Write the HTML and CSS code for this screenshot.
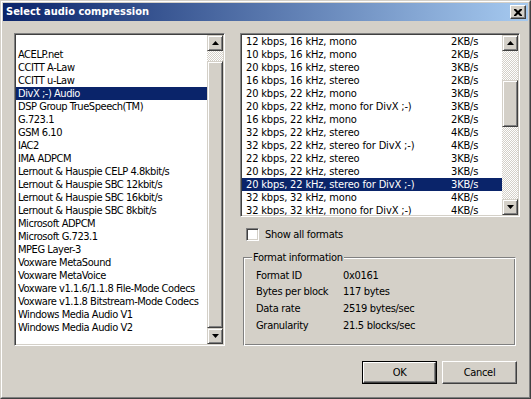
FILE: index.html
```html
<!DOCTYPE html>
<html>
<head>
<meta charset="utf-8">
<link rel="stylesheet" href="styles.css">
</head>
<body>
<div class="win">
  <div class="win-in">
    <div class="titlebar">
      <span class="title">Select audio compression</span>
      <div class="closebtn"><svg width="8" height="7" viewBox="0 0 8 7"><path d="M0 0h2l2 2 2-2h2v1l-2.5 2.5L8 6v1H6L4 5 2 7H0V6l2.5-2.5L0 1z" fill="#000"/></svg></div>
    </div>
    <div class="main">
      <div class="listbox lbox">
        <ul class="items litems">
          <li>&nbsp;</li>
          <li>ACELP.net</li>
          <li>CCITT A-Law</li>
          <li>CCITT u-Law</li>
          <li class="sel">DivX ;-) Audio</li>
          <li>DSP Group TrueSpeech(TM)</li>
          <li>G.723.1</li>
          <li>GSM 6.10</li>
          <li>IAC2</li>
          <li>IMA ADPCM</li>
          <li>Lernout &amp; Hauspie CELP 4.8kbit/s</li>
          <li>Lernout &amp; Hauspie SBC 12kbit/s</li>
          <li>Lernout &amp; Hauspie SBC 16kbit/s</li>
          <li>Lernout &amp; Hauspie SBC 8kbit/s</li>
          <li>Microsoft ADPCM</li>
          <li>Microsoft G.723.1</li>
          <li>MPEG Layer-3</li>
          <li>Voxware MetaSound</li>
          <li>Voxware MetaVoice</li>
          <li>Voxware v1.1.6/1.1.8 File-Mode Codecs</li>
          <li>Voxware v1.1.8 Bitstream-Mode Codecs</li>
          <li>Windows Media Audio V1</li>
          <li>Windows Media Audio V2</li>
        </ul>
        <div class="sb">
          <div class="sbtn"><svg width="7" height="4" viewBox="0 0 7 4"><path d="M3.5 0L7 4H0z" fill="#000"/></svg></div>
          <div class="track lt1"></div>
          <div class="thumb lth"></div>
          <div class="sbtn"><svg width="7" height="4" viewBox="0 0 7 4"><path d="M0 0h7L3.5 4z" fill="#000"/></svg></div>
        </div>
      </div>
      <div class="rcol">
        <div class="listbox rbox">
          <ul class="items ritems">
            <li><span class="c1">12 kbps, 16 kHz, mono</span><span>2KB/s</span></li>
            <li><span class="c1">10 kbps, 16 kHz, mono</span><span>2KB/s</span></li>
            <li><span class="c1">20 kbps, 16 kHz, stereo</span><span>3KB/s</span></li>
            <li><span class="c1">16 kbps, 16 kHz, stereo</span><span>2KB/s</span></li>
            <li><span class="c1">20 kbps, 22 kHz, mono</span><span>3KB/s</span></li>
            <li><span class="c1">20 kbps, 22 kHz, mono for DivX ;-)</span><span>3KB/s</span></li>
            <li><span class="c1">16 kbps, 22 kHz, mono</span><span>2KB/s</span></li>
            <li><span class="c1">32 kbps, 22 kHz, stereo</span><span>4KB/s</span></li>
            <li><span class="c1">32 kbps, 22 kHz, stereo for DivX ;-)</span><span>4KB/s</span></li>
            <li><span class="c1">22 kbps, 22 kHz, stereo</span><span>3KB/s</span></li>
            <li><span class="c1">20 kbps, 22 kHz, stereo</span><span>3KB/s</span></li>
            <li class="sel"><span class="c1">20 kbps, 22 kHz, stereo for DivX ;-)</span><span>3KB/s</span></li>
            <li><span class="c1">32 kbps, 32 kHz, mono</span><span>4KB/s</span></li>
            <li><span class="c1">32 kbps, 32 kHz, mono for DivX ;-)</span><span>4KB/s</span></li>
          </ul>
          <div class="sb">
            <div class="sbtn"><svg width="7" height="4" viewBox="0 0 7 4"><path d="M3.5 0L7 4H0z" fill="#000"/></svg></div>
            <div class="track rt1"></div>
            <div class="thumb rth"></div>
            <div class="track rt2"></div>
            <div class="sbtn"><svg width="7" height="4" viewBox="0 0 7 4"><path d="M0 0h7L3.5 4z" fill="#000"/></svg></div>
          </div>
        </div>
        <div class="chkrow">
          <span class="chk"></span>
          <span class="chklabel">Show all formats</span>
        </div>
        <div class="group">
          <span class="legend">Format information</span>
          <div class="info">
            <span>Format ID</span><span>0x0161</span>
            <span>Bytes per block</span><span>117 bytes</span>
            <span>Data rate</span><span>2519 bytes/sec</span>
            <span>Granularity</span><span>21.5 blocks/sec</span>
          </div>
        </div>
      </div>
    </div>
    <div class="buttons">
      <div class="btn default"><div class="btn-in">OK</div></div>
      <div class="btn"><div class="btn-in">Cancel</div></div>
    </div>
  </div>
</div>
</body>
</html>
```
FILE: styles.css
```css
html, body {
  margin: 0;
  padding: 0;
  background: #d4d0c8;
}
body {
  font-family: "DejaVu Sans Condensed", "DejaVu Sans", sans-serif;
  font-stretch: condensed;
  font-size: 11px;
  letter-spacing: -0.3px;
  color: #000;
}
.win {
  width: 531px;
  height: 399px;
  box-sizing: border-box;
  border: 1px solid;
  border-color: #d4d0c8 #404040 #404040 #d4d0c8;
}
.win-in {
  height: 100%;
  box-sizing: border-box;
  border: 1px solid;
  border-color: #fff #808080 #808080 #fff;
  padding: 1px;
  background: #d4d0c8;
}
.titlebar {
  height: 18px;
  background: linear-gradient(to right, #0a246a, #a6caf0);
  display: flex;
  align-items: center;
  justify-content: space-between;
  padding: 0 2px 0 3px;
}
.title {
  color: #fff;
  font-weight: bold;
  font-size: 11px;
  letter-spacing: 0;
  line-height: 18px;
}
.closebtn {
  width: 16px;
  height: 14px;
  box-sizing: border-box;
  background: #d4d0c8;
  border: 1px solid;
  border-color: #fff #404040 #404040 #fff;
  box-shadow: inset -1px -1px #808080;
  display: flex;
  align-items: center;
  justify-content: center;
  padding-right: 1px;
}
.closebtn svg { display: block; }
.main {
  display: flex;
  padding: 12px 0 0 11px;
  gap: 15px;
}
.listbox {
  box-sizing: border-box;
  border: 1px solid;
  border-color: #808080 #fff #fff #808080;
  box-shadow: inset 1px 1px #404040, inset -1px -1px #d4d0c8;
  background: #fff;
  padding: 1px;
  display: flex;
}
.lbox {
  width: 211px;
  height: 313px;
}
.items {
  list-style: none;
  margin: 0;
  padding: 0;
  flex: 1;
  overflow: hidden;
}
.items li {
  height: 13px;
  line-height: 13px;
  padding-left: 2px;
  white-space: nowrap;
  overflow: hidden;
}
.litems li {
  letter-spacing: -0.45px;
}
.items li.sel {
  background: #0a246a;
  color: #fff;
}
.ritems li {
  padding-left: 4px;
  display: flex;
  letter-spacing: -0.15px;
}
.c1 {
  width: 205px;
  flex: none;
}
.sb {
  width: 16px;
  display: flex;
  flex-direction: column;
  flex: none;
}
.sbtn, .thumb {
  box-sizing: border-box;
  background: #d4d0c8;
  border: 1px solid;
  border-color: #d4d0c8 #404040 #404040 #d4d0c8;
  box-shadow: inset 1px 1px #fff, inset -1px -1px #808080;
}
.sbtn {
  height: 16px;
  display: flex;
  align-items: center;
  justify-content: center;
  flex: none;
}
.sbtn svg { display: block; }
.track {
  background-image: conic-gradient(#fff 25%, #d4d0c8 0 50%, #fff 0 75%, #d4d0c8 0);
  background-size: 2px 2px;
  flex: none;
}
.lt1 { height: 10px; }
.lth { height: 267px; flex: none; }
.rt1 { height: 29px; }
.rth { height: 47px; flex: none; }
.rt2 { height: 72px; }
.rcol {
  width: 280px;
  display: flex;
  flex-direction: column;
}
.rbox {
  height: 184px;
}
.chkrow {
  display: flex;
  align-items: center;
  margin: 11px 0 0 6px;
  height: 13px;
}
.chk {
  width: 13px;
  height: 13px;
  box-sizing: border-box;
  border: 1px solid;
  border-color: #808080 #fff #fff #808080;
  box-shadow: inset 1px 1px #404040, inset -1px -1px #d4d0c8;
  background: #fff;
}
.chklabel {
  margin-left: 6px;
  line-height: 13px;
}
.group {
  position: relative;
  margin: 16px 0 0 3px;
  width: 273px;
  height: 89px;
  box-sizing: border-box;
  border: 1px solid;
  border-color: #808080 #fff #fff #808080;
  box-shadow: inset 1px 1px #fff, inset -1px -1px #808080;
}
.legend {
  position: absolute;
  top: -7px;
  left: 8px;
  padding: 0 1px;
  background: #d4d0c8;
  line-height: 13px;
}
.info {
  display: grid;
  grid-template-columns: 87px auto;
  grid-auto-rows: 16.67px;
  align-items: center;
  padding: 9px 0 0 12px;
}
.buttons {
  display: flex;
  justify-content: flex-end;
  gap: 5px;
  padding: 15px 11px 0 0;
}
.btn {
  width: 75px;
  height: 23px;
  box-sizing: border-box;
  background: #d4d0c8;
  border: 1px solid;
  border-color: #fff #404040 #404040 #fff;
  box-shadow: inset -1px -1px #808080;
}
.btn .btn-in {
  height: 100%;
  display: flex;
  align-items: center;
  justify-content: center;
}
.btn.default {
  border: 1px solid #000;
  box-shadow: none;
}
.btn.default .btn-in {
  box-sizing: border-box;
  border: 1px solid;
  border-color: #fff #404040 #404040 #fff;
  box-shadow: inset -1px -1px #808080;
}
```
